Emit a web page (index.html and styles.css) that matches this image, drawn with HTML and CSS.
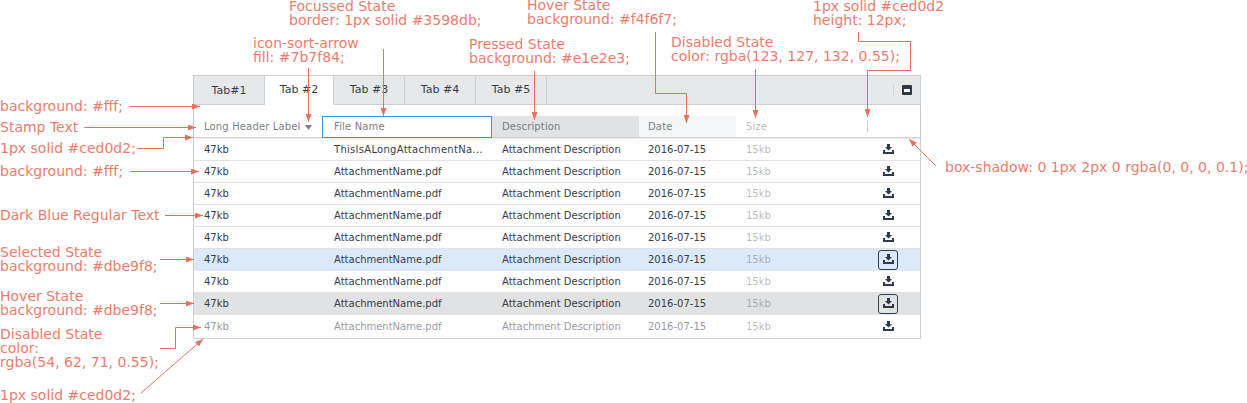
FILE: index.html
```html
<!DOCTYPE html>
<html lang="en">
<head>
<meta charset="utf-8">
<title>Attachment grid</title>
<link rel="stylesheet" href="styles.css">
</head>
<body>
<main class="panel">
  <div class="tabs">
    <div class="tab">Tab#1</div>
    <div class="tab tab-active">Tab #2</div>
    <div class="tab">Tab #3</div>
    <div class="tab">Tab #4</div>
    <div class="tab">Tab #5</div>
    <div class="tab-tools">
      <span class="tool-sep"></span>
      <svg class="tool-icon" width="10" height="10" viewBox="0 0 10 10"><path fill="#2f3a46" d="M1 0h8a1 1 0 0 1 1 1v8a1 1 0 0 1-1 1H1a1 1 0 0 1-1-1V1a1 1 0 0 1 1-1z"/><path fill="#fff" d="M2 4h6v3H2z"/></svg>
    </div>
  </div>
  <div class="head">
    <div class="hc c1">Long Header Label <svg class="sort" width="7" height="5" viewBox="0 0 7 5"><path fill="#7b7f84" d="M0 0h7L3.500 5z"/></svg></div>
    <div class="hc c2 focus">File Name</div>
    <div class="hc c3 pressed">Description</div>
    <div class="hc c4 hover">Date</div>
    <div class="hc c5 disabled">Size</div>
    <div class="hc c7"><span class="resize"></span></div>
  </div>
  <div class="row"><div class="c1">47kb</div><div class="c2 long">ThisIsALongAttachmentNa...</div><div class="c3">Attachment Description</div><div class="c4">2016-07-15</div><div class="c5 dim">15kb</div><div class="c6"><span class="dl"><svg width="11" height="11" viewBox="0 0 11 11"><use href="#dl"/></svg></span></div></div>
  <div class="row"><div class="c1">47kb</div><div class="c2">AttachmentName.pdf</div><div class="c3">Attachment Description</div><div class="c4">2016-07-15</div><div class="c5 dim">15kb</div><div class="c6"><span class="dl"><svg width="11" height="11" viewBox="0 0 11 11"><use href="#dl"/></svg></span></div></div>
  <div class="row"><div class="c1">47kb</div><div class="c2">AttachmentName.pdf</div><div class="c3">Attachment Description</div><div class="c4">2016-07-15</div><div class="c5 dim">15kb</div><div class="c6"><span class="dl"><svg width="11" height="11" viewBox="0 0 11 11"><use href="#dl"/></svg></span></div></div>
  <div class="row"><div class="c1">47kb</div><div class="c2">AttachmentName.pdf</div><div class="c3">Attachment Description</div><div class="c4">2016-07-15</div><div class="c5 dim">15kb</div><div class="c6"><span class="dl"><svg width="11" height="11" viewBox="0 0 11 11"><use href="#dl"/></svg></span></div></div>
  <div class="row"><div class="c1">47kb</div><div class="c2">AttachmentName.pdf</div><div class="c3">Attachment Description</div><div class="c4">2016-07-15</div><div class="c5 dim">15kb</div><div class="c6"><span class="dl"><svg width="11" height="11" viewBox="0 0 11 11"><use href="#dl"/></svg></span></div></div>
  <div class="row selected"><div class="c1">47kb</div><div class="c2">AttachmentName.pdf</div><div class="c3">Attachment Description</div><div class="c4">2016-07-15</div><div class="c5 dim">15kb</div><div class="c6"><span class="dl boxed"><svg width="11" height="11" viewBox="0 0 11 11"><use href="#dl"/></svg></span></div></div>
  <div class="row"><div class="c1">47kb</div><div class="c2">AttachmentName.pdf</div><div class="c3">Attachment Description</div><div class="c4">2016-07-15</div><div class="c5 dim">15kb</div><div class="c6"><span class="dl"><svg width="11" height="11" viewBox="0 0 11 11"><use href="#dl"/></svg></span></div></div>
  <div class="row hovered"><div class="c1">47kb</div><div class="c2">AttachmentName.pdf</div><div class="c3">Attachment Description</div><div class="c4">2016-07-15</div><div class="c5 dim">15kb</div><div class="c6"><span class="dl boxed"><svg width="11" height="11" viewBox="0 0 11 11"><use href="#dl"/></svg></span></div></div>
  <div class="row row-disabled"><div class="c1">47kb</div><div class="c2">AttachmentName.pdf</div><div class="c3">Attachment Description</div><div class="c4">2016-07-15</div><div class="c5 dim">15kb</div><div class="c6"><span class="dl"><svg width="11" height="11" viewBox="0 0 11 11"><use href="#dl"/></svg></span></div></div>
</main>

<svg class="defs" width="0" height="0"><defs>
  <g id="dl"><path fill="#2f3a46" d="M4 0h3v3h2L5.500 6.500 2 3h2z"/><path fill="#2f3a46" d="M0 6h2v2h7V6h2v4H0z"/></g>
  <marker id="head" viewBox="0 0 8 6" refX="8" refY="3" markerWidth="8" markerHeight="6" markerUnits="userSpaceOnUse" orient="auto"><path d="M0 0l8 3-8 3z" fill="#e9705f"/></marker>
</defs></svg>

<svg class="arrows" width="1247" height="403" viewBox="0 0 1247 403">
  <g fill="none" stroke="#e9705f">
    <path d="M308.500 68V122" marker-end="url(#head)"/>
    <path d="M383.500 49V116" marker-end="url(#head)"/>
    <path d="M534.500 71V120" marker-end="url(#head)"/>
    <path d="M655.500 32V93.500H686.500V123" marker-end="url(#head)"/>
    <path d="M755.500 69V118" marker-end="url(#head)"/>
    <path d="M858.500 32V41.500H910.500V70.500H867.500V117" marker-end="url(#head)"/>
    <path d="M129 106.500H200" marker-end="url(#head)"/>
    <path d="M84 127.500H196" marker-end="url(#head)"/>
    <path d="M137 148.500H163.500V137.500H193" marker-end="url(#head)"/>
    <path d="M130 171.500H199" marker-end="url(#head)"/>
    <path d="M165 215.500H203" marker-end="url(#head)"/>
    <path d="M160 259.500H194" marker-end="url(#head)"/>
    <path d="M160 303.500H194" marker-end="url(#head)"/>
    <path d="M160 348.500H175.500V327.500H201" marker-end="url(#head)"/>
    <path d="M141 393L203 339" marker-end="url(#head)"/>
    <path d="M936 166L909 139" marker-end="url(#head)"/>
  </g>
</svg>

<div class="note n-focus">Focussed State<br>border: 1px solid #3598db;</div>
<div class="note n-hover">Hover State<br>background: #f4f6f7;</div>
<div class="note n-sep">1px solid #ced0d2<br>height: 12px;</div>
<div class="note n-sort">icon-sort-arrow<br>fill: #7b7f84;</div>
<div class="note n-pressed">Pressed State<br>background: #e1e2e3;</div>
<div class="note n-disabled">Disabled State<br>color: rgba(123, 127, 132, 0.55);</div>
<div class="note n-bg1">background: #fff;</div>
<div class="note n-stamp">Stamp Text</div>
<div class="note n-border1">1px solid #ced0d2;</div>
<div class="note n-bg2">background: #fff;</div>
<div class="note n-dark">Dark Blue Regular Text</div>
<div class="note n-selected">Selected State<br>background: #dbe9f8;</div>
<div class="note n-rowhover">Hover State<br>background: #dbe9f8;</div>
<div class="note n-rowdis">Disabled State<br>color:<br>rgba(54, 62, 71, 0.55);</div>
<div class="note n-border2">1px solid #ced0d2;</div>
<div class="note n-shadow">box-shadow: 0 1px 2px 0 rgba(0, 0, 0, 0.1);</div>
</body>
</html>
```
FILE: styles.css
```css
* { box-sizing: border-box; }
html, body { margin: 0; padding: 0; background: #fff; }
body {
  position: relative;
  width: 1247px;
  height: 403px;
  overflow: hidden;
  padding: 75px 0 0 193px;
  font-family: "DejaVu Sans", Verdana, sans-serif;
}
.panel {
  width: 728px;
  height: 264px;
  border: 1px solid #ced0d2;
  font-size: 10px;
  color: #363e47;
  background: #fff;
}
.tabs {
  display: flex;
  height: 29px;
  background: #e7e8ea;
  border-bottom: 1px solid #ced0d2;
  font-size: 11px;
}
.tab {
  width: 71px;
  height: 29px;
  padding-top: 8px;
  text-align: center;
  border-right: 1px solid #ced0d2;
  line-height: 12px;
}
.tab:first-child { padding-top: 9px; }
.tab-active { width: 69px; background: #fff; border-bottom: 1px solid #fff; }
.tab-tools { flex: 1; display: flex; align-items: center; justify-content: flex-end; padding-right: 8px; gap: 8px; }
.tool-sep { width: 1px; height: 10px; background: #ced0d2; }
.head {
  display: flex;
  height: 33px;
  padding-top: 11px;
  margin-bottom: 1px;
  border-bottom: 1px solid #ced0d2;
  box-shadow: 0 1px 2px 0 rgba(0, 0, 0, 0.1);
  color: #7b7f84;
  position: relative;
}
.hc { height: 21px; line-height: 22px; white-space: nowrap; letter-spacing: 0.15px; }
.row {
  display: flex;
  height: 22px;
  line-height: 22px;
  border-bottom: 1px solid #e1e2e3;
  white-space: nowrap;
}
.row:last-child { height: 23px; line-height: 23px; border-bottom: 0; }
.c1 { width: 128px; padding-left: 10px; }
.c2 { width: 170px; padding-left: 12px; }
.c3 { width: 147px; padding-left: 10px; }
.c4 { width: 97px; padding-left: 9px; }
.c5 { width: 131px; padding-left: 10px; }
.c6 { flex: 1; display: flex; padding-left: 11px; align-items: center; }
.c7 { flex: 1; }
.long { letter-spacing: 0.28px; }
.focus { border: 1px solid #3598db; height: 22px; padding-left: 11px; line-height: 20px; }
.pressed { background: #e1e2e3; }
.hover { background: #f4f6f7; }
.disabled { color: rgba(123, 127, 132, 0.55); }
.dim { color: rgba(123, 127, 132, 0.55); }
.sort { margin-left: 1px; }
.resize { display: block; width: 1px; height: 12px; margin-top: 4px; background: #ced0d2; }
.selected { background: #dbe9f8; border-bottom-color: #dbe9f8; }
.hovered { background: #e1e2e3; border-bottom-color: #e1e2e3; }
.row-disabled { color: rgba(54, 62, 71, 0.55); }
.dl { display: flex; width: 20px; height: 20px; align-items: center; justify-content: center; border: 1px solid transparent; border-radius: 3px; }
.boxed { border-color: #363e47; }
.defs { position: absolute; }
.arrows { position: absolute; left: 0; top: 0; pointer-events: none; }
.note {
  position: absolute;
  font-size: 14px;
  line-height: 14px;
  color: #ee7c6c;
  white-space: nowrap;
}
.n-focus { left: 289px; top: -1px; }
.n-hover { left: 527px; top: -2px; }
.n-sep { left: 813px; top: -1px; }
.n-sort { left: 253px; top: 36px; }
.n-pressed { left: 469px; top: 37px; }
.n-disabled { left: 671px; top: 35px; }
.n-bg1 { left: 0; top: 99px; }
.n-stamp { left: 0; top: 120px; }
.n-border1 { left: 0; top: 141px; }
.n-bg2 { left: 0; top: 164px; }
.n-dark { left: 0; top: 208px; }
.n-selected { left: 0; top: 245px; }
.n-rowhover { left: 0; top: 289px; }
.n-rowdis { left: 0; top: 327px; }
.n-border2 { left: 0; top: 388px; }
.n-shadow { left: 945px; top: 160px; }
```
